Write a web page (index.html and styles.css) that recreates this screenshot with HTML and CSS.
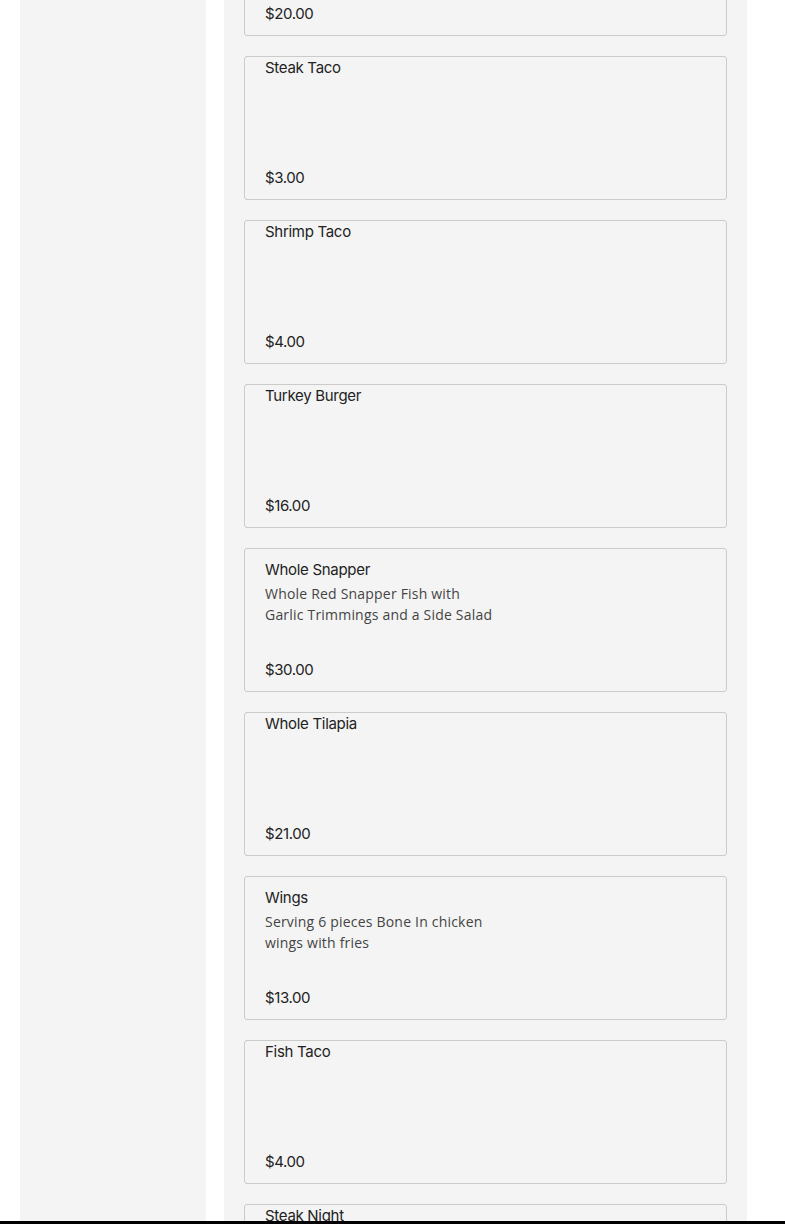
FILE: index.html
```html
<!DOCTYPE html>
<html>
<head>
    <title>Menu</title>
    <meta charset="utf-8">
    <link rel="stylesheet" href="styles.css">
</head>
<body>
    <div class="page">
        <div class="sidebar"></div>

        <div class="menu">
            <div class="item">
                <div class="item-info">
                    <div class="item-name">Oxtail Dinner</div>
                </div>
                <div class="item-price">$20.00</div>
            </div>

            <div class="item">
                <div class="item-info">
                    <div class="item-name">Steak Taco</div>
                </div>
                <div class="item-price">$3.00</div>
            </div>

            <div class="item">
                <div class="item-info">
                    <div class="item-name">Shrimp Taco</div>
                </div>
                <div class="item-price">$4.00</div>
            </div>

            <div class="item">
                <div class="item-info">
                    <div class="item-name">Turkey Burger</div>
                </div>
                <div class="item-price">$16.00</div>
            </div>

            <div class="item">
                <div class="item-info has-desc">
                    <div class="item-name">Whole Snapper</div>
                    <div class="item-desc">Whole Red Snapper Fish with Garlic Trimmings and a Side Salad</div>
                </div>
                <div class="item-price">$30.00</div>
            </div>

            <div class="item">
                <div class="item-info">
                    <div class="item-name">Whole Tilapia</div>
                </div>
                <div class="item-price">$21.00</div>
            </div>

            <div class="item">
                <div class="item-info has-desc">
                    <div class="item-name">Wings</div>
                    <div class="item-desc">Serving 6 pieces Bone In chicken wings with fries</div>
                </div>
                <div class="item-price">$13.00</div>
            </div>

            <div class="item">
                <div class="item-info">
                    <div class="item-name">Fish Taco</div>
                </div>
                <div class="item-price">$4.00</div>
            </div>

            <div class="item">
                <div class="item-info">
                    <div class="item-name">Steak Night</div>
                </div>
                <div class="item-price">$25.00</div>
            </div>
        </div>
    </div>

    <div class="bottom-bar"></div>
</body>
</html>
```

FILE: styles.css
```css
body {
    margin: 0;
    background-color: white;
    font-family: Inter, "Liberation Sans", sans-serif;
    color: #222;
}
.page {
    display: flex;
    gap: 18px;
    padding-left: 20px;
    width: 727px;
    margin-top: -128px;
}
.sidebar {
    width: 186px;
    flex-shrink: 0;
    background-color: #f4f4f4;
}
.menu {
    flex: 1;
    background-color: #f4f4f4;
    padding: 20px;
    display: flex;
    flex-direction: column;
    gap: 20px;
}
.item {
    height: 142px;
    border: 1px solid #cbcbcb;
    border-radius: 3px;
    padding: 0 20px;
    display: flex;
    flex-direction: column;
}
.item-info {
    padding-top: 1px;
}
.item-info.has-desc {
    padding-top: 11px;
}
.item-name {
    font-size: 15px;
    font-weight: 400;
    line-height: 20px;
    letter-spacing: -0.3px;
}
.item-desc {
    font-family: "Open Sans", sans-serif;
    font-size: 14px;
    line-height: 21px;
    color: #444;
    max-width: 234px;
    margin-top: 3px;
    letter-spacing: 0.2px;
}
.item-price {
    margin-top: auto;
    margin-bottom: 11px;
    font-size: 15px;
    font-weight: 400;
    line-height: 20px;
    letter-spacing: -0.4px;
}
.bottom-bar {
    position: fixed;
    left: 0;
    right: 0;
    bottom: 0;
    height: 3px;
    background-color: black;
}
```
